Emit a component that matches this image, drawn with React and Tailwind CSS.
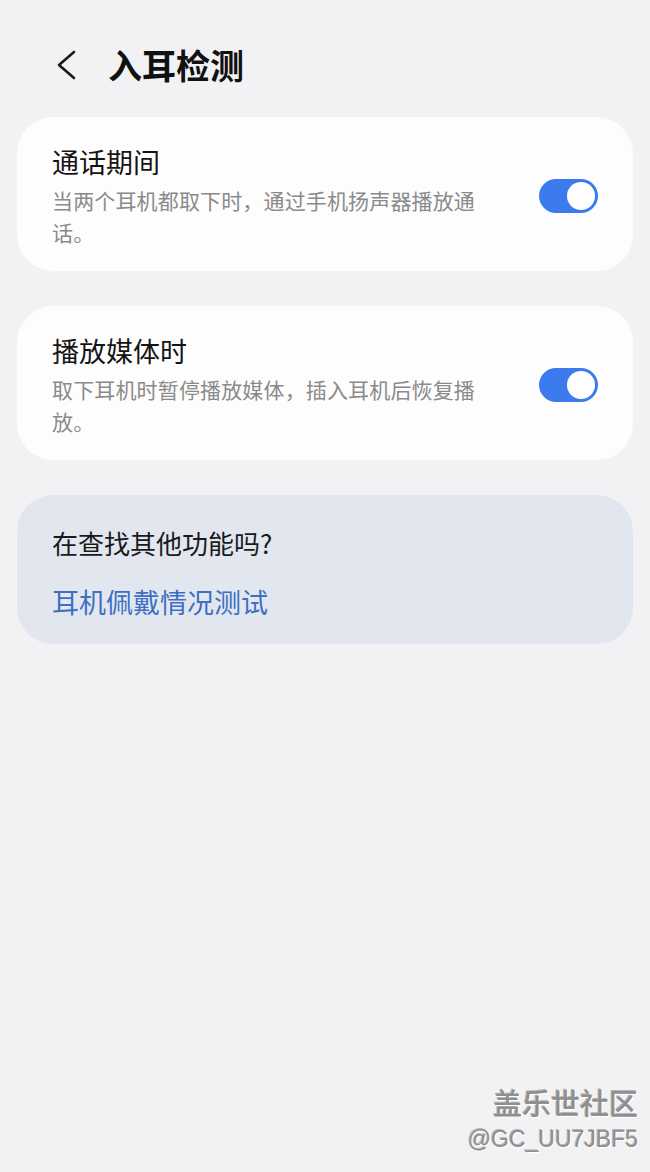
import React from "react";

function Toggle() {
  return (
    <div className="w-[59px] h-[34px] rounded-full bg-[#3b7bee] flex items-center justify-end pr-[3px] shrink-0">
      <div className="w-[28px] h-[28px] rounded-full bg-white" />
    </div>
  );
}

function SettingCard({ title, desc }) {
  return (
    <div className="bg-[#fdfdfd] rounded-[36px] pl-[35px] pr-[35px] pt-[27px] pb-[23px] flex items-center justify-between">
      <div className="w-[436px]">
        <div className="text-[27px] leading-[36px] text-[#141414]">{title}</div>
        <div className="mt-[4px] text-[21px] leading-[32px] tracking-[0.15px] text-[#8a8a8a]">{desc}</div>
      </div>
      <Toggle />
    </div>
  );
}

export default function App() {
  return (
    <div
      className="relative w-[650px] h-[1172px] bg-[#f2f2f4] overflow-hidden"
      style={{ fontFamily: '"Noto Sans CJK SC", "Noto Sans", sans-serif' }}
    >
      <div className="flex items-center pt-[44px] h-[86px] pl-[54px]">
        <svg width="24" height="32" viewBox="0 0 24 32" className="shrink-0">
          <path d="M20 3 L5 16 L20 29" fill="none" stroke="#1a1a1a" strokeWidth="2.6" strokeLinecap="round" strokeLinejoin="round" />
        </svg>
        <div className="ml-[30px] text-[34px] leading-[42px] font-bold text-[#111]">入耳检测</div>
      </div>

      <div className="px-[17px] mt-[31px] flex flex-col gap-[35px]">
        <SettingCard title="通话期间" desc="当两个耳机都取下时，通过手机扬声器播放通话。" />
        <SettingCard title="播放媒体时" desc="取下耳机时暂停播放媒体，插入耳机后恢复播放。" />
        <div className="bg-[#e2e7ef] rounded-[36px] px-[35px] pt-[30px] pb-[24px] flex flex-col gap-[23px]">
          <div className="text-[26px] leading-[36px] text-[#1a1a1a]">在查找其他功能吗?</div>
          <div className="text-[27px] leading-[36px] text-[#3d6fc2]">耳机佩戴情况测试</div>
        </div>
      </div>

      <div className="absolute right-[12px] bottom-[16px] flex flex-col items-end text-[#8f8f8f]" style={{ textShadow: "1px 1px 0 #ffffff, -1px -1px 0 #b5b5b5" }}>
        <div className="text-[29px] leading-[40px] font-medium">盖乐世社区</div>
        <div className="text-[23px] leading-[34px]" style={{ fontFamily: '"Liberation Sans", sans-serif' }}>@GC_UU7JBF5</div>
      </div>
    </div>
  );
}
